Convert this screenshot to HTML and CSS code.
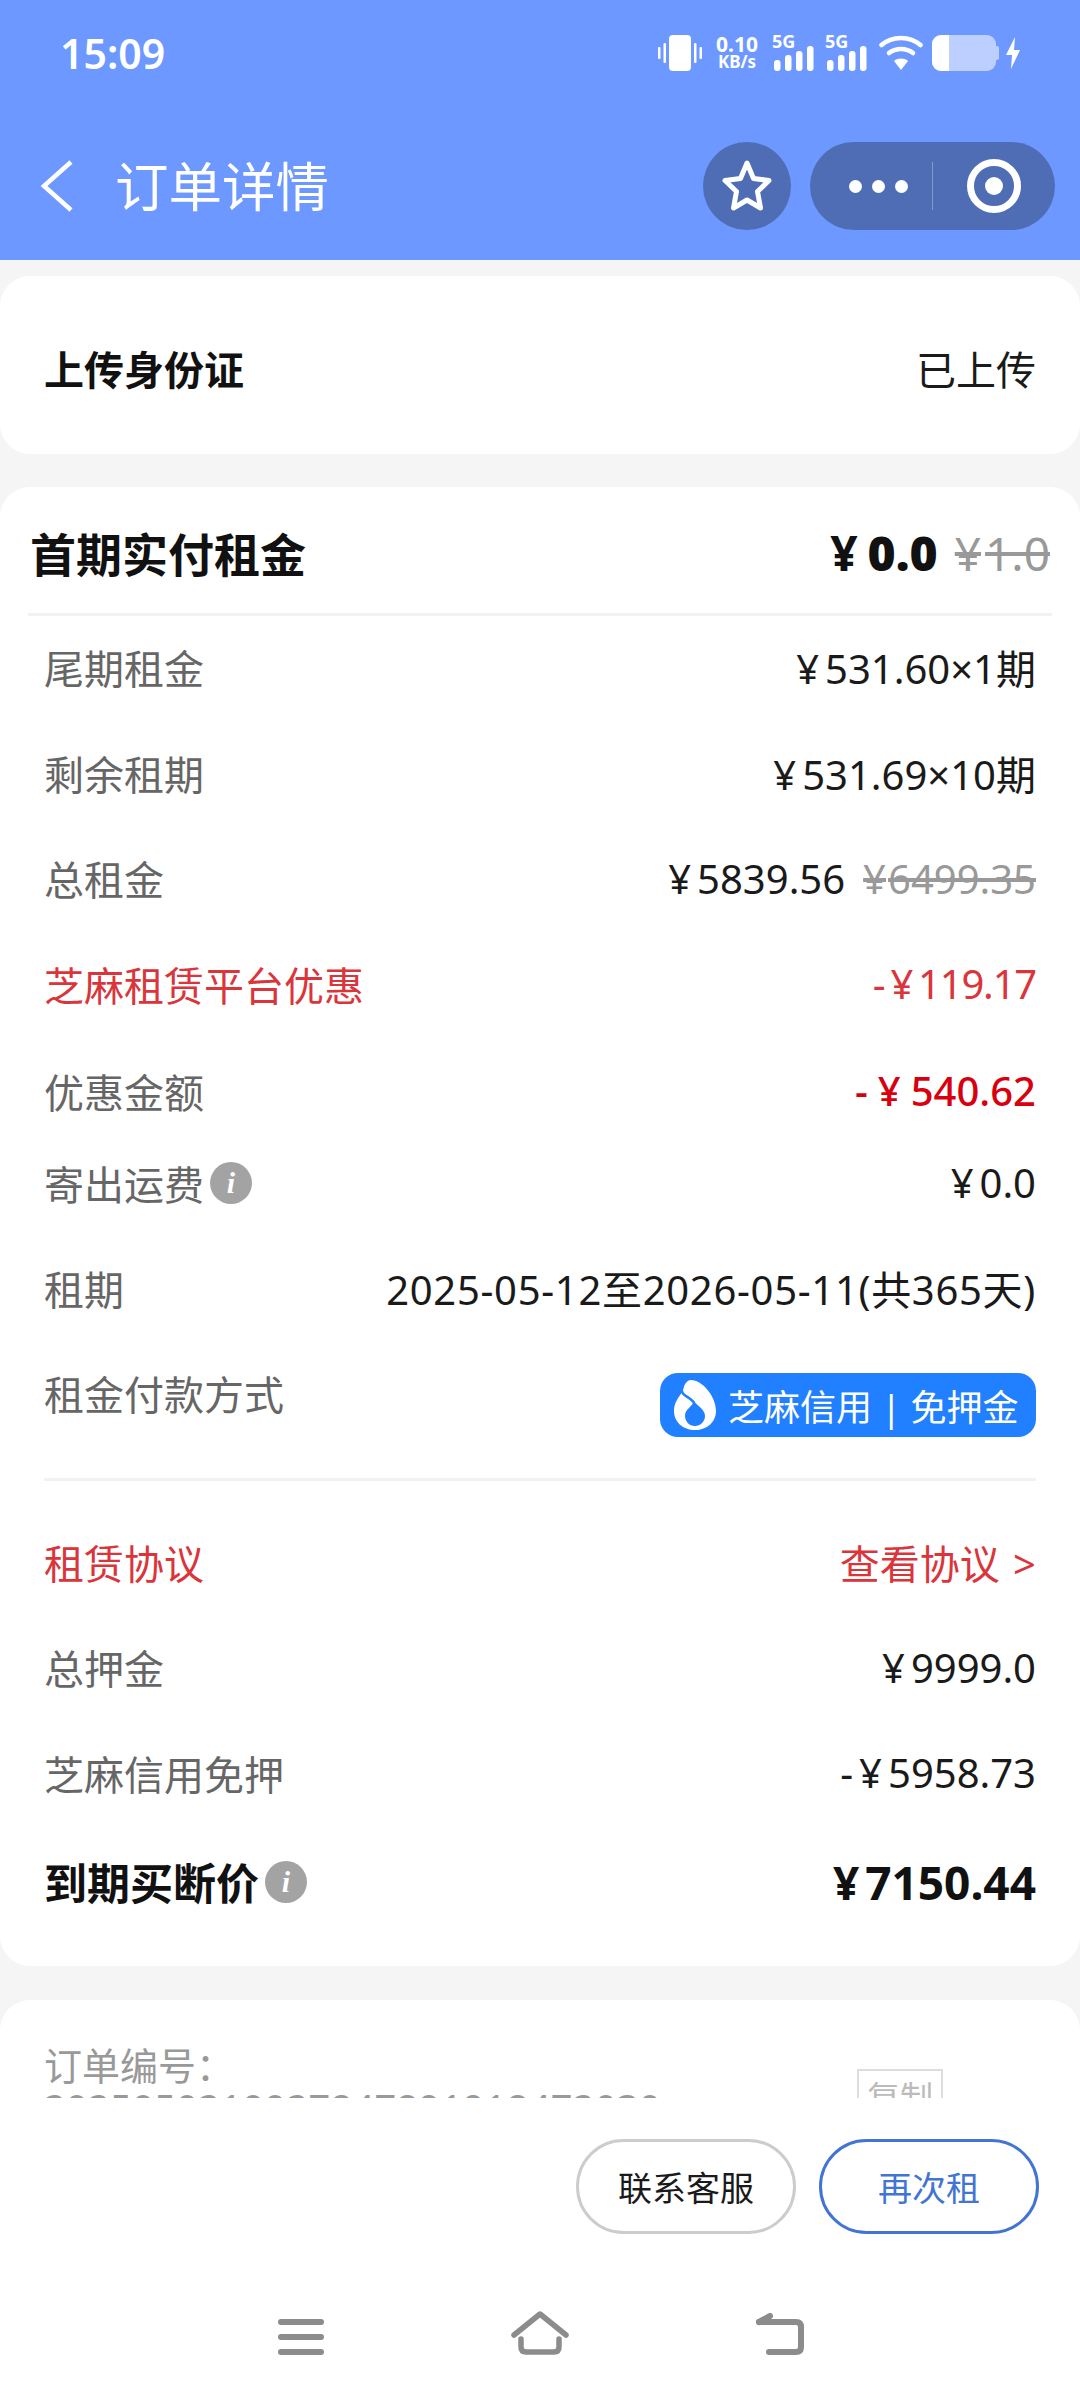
FILE: index.html
```html
<!DOCTYPE html>
<html lang="zh-CN">
<head>
    <meta charset="UTF-8">
    <meta name="viewport" content="width=device-width, initial-scale=1.0">
    <title>订单详情</title>
    <link rel="stylesheet" href="styles.css">
</head>
<body>
    <div class="page">
        <header class="header">
            <div class="status-bar">
                <span class="time">15:09</span>
                <div class="status-icons">
                    <svg class="ic-vibrate" width="44" height="36" viewBox="0 0 44 36" fill="#fff"><rect x="11" y="0" width="22" height="36" rx="4"/><rect x="0" y="12" width="2.5" height="12" rx="1"/><rect x="5.5" y="8" width="2.5" height="20" rx="1"/><rect x="36" y="8" width="2.5" height="20" rx="1"/><rect x="41.5" y="12" width="2.5" height="12" rx="1"/></svg>
                    <div class="speed"><span class="speed-num">0.10</span><span>KB/s</span></div>
                    <div class="signal">
                        <span class="net">5G</span>
                        <svg width="40" height="25" viewBox="0 0 40 25" fill="#fff"><rect x="0" y="14" width="6.500" height="11" rx="3"/><rect x="11" y="9" width="6.500" height="16" rx="3"/><rect x="22" y="5" width="6.500" height="20" rx="3"/><rect x="33" y="0" width="6.500" height="25" rx="3"/></svg>
                    </div>
                    <div class="signal">
                        <span class="net">5G</span>
                        <svg width="40" height="25" viewBox="0 0 40 25" fill="#fff"><rect x="0" y="14" width="6.500" height="11" rx="3"/><rect x="11" y="9" width="6.500" height="16" rx="3"/><rect x="22" y="5" width="6.500" height="20" rx="3"/><rect x="33" y="0" width="6.500" height="25" rx="3"/></svg>
                    </div>
                    <svg class="ic-wifi" width="44" height="36" viewBox="0 0 44 36" fill="none" stroke="#fff" stroke-width="4.500" stroke-linecap="round"><path d="M2.500 10C13 0.500 31 0.500 41.500 10"/><path d="M10 18C16.500 12.500 27.500 12.500 34 18"/><path d="M22 35L15 26C19 22.800 25 22.800 29 26Z" fill="#fff" stroke="none"/></svg>
                    <div class="battery"><div class="battery-fill"></div></div>
                    <svg class="ic-bolt" width="14" height="32" viewBox="0 0 14 32" fill="#fff"><path d="M9 0L0 18H6L5 32L14 13H8Z"/></svg>
                </div>
            </div>
            <div class="nav-bar">
                <svg class="ic-back" width="34" height="52" viewBox="0 0 34 52" fill="none" stroke="#fff" stroke-width="4.500"><path d="M31 2L4 26L31 50"/></svg>
                <h1 class="nav-title">订单详情</h1>
                <div class="fav">
                    <svg width="50" height="52" viewBox="0 0 50 52" fill="none" stroke="#fff" stroke-width="5" stroke-linejoin="round"><path d="M25 3L31.500 18.500L47 20.500L35.500 31.500L38.500 48L25 40L11.500 48L14.500 31.500L3 20.500L18.500 18.500Z"/></svg>
                </div>
                <div class="capsule">
                    <div class="capsule-more"><i></i><i></i><i></i></div>
                    <div class="capsule-line"></div>
                    <div class="capsule-ring"><i></i></div>
                </div>
            </div>
        </header>

        <main class="content">
            <section class="card card-upload">
                <span class="upload-label">上传身份证</span>
                <span class="val">已上传</span>
            </section>

            <section class="card card-price">
                <div class="price-head">
                    <span class="head-label">首期实付租金</span>
                    <span class="head-val"><span class="y">¥</span><b>0.0</b><s><span class="y">¥</span>1.0</s></span>
                </div>
                <div class="row"><span class="lab">尾期租金</span><span class="val"><span class="y">¥</span>531.60×1期</span></div>
                <div class="row"><span class="lab">剩余租期</span><span class="val"><span class="y">¥</span>531.69×10期</span></div>
                <div class="row"><span class="lab">总租金</span><span class="val"><span class="y">¥</span>5839.56<s class="old"><span class="y">¥</span>6499.35</s></span></div>
                <div class="row"><span class="lab red">芝麻租赁平台优惠</span><span class="val red val-tight"><span class="y">-</span><span class="y">¥</span>119.17</span></div>
                <div class="row row-discount"><span class="lab">优惠金额</span><span class="val bright"><span class="y">-</span><span class="y">¥</span>540.62</span></div>
                <div class="row row-freight"><span class="lab">寄出运费<em class="info">i</em></span><span class="val"><span class="y">¥</span>0.0</span></div>
                <div class="row"><span class="lab">租期</span><span class="val val-date">2025-05-12至2026-05-11(共365天)</span></div>
                <div class="row">
                    <span class="lab">租金付款方式</span>
                    <span class="badge">
                        <svg width="42" height="50" viewBox="0 0 42 50">
                            <path fill="#fff" d="M17 0C28 0 42 16 42 31C42 42 33 50 21 50C9 50 0 42 0 31C0 23 4 18 9 11C10 4 13 0 17 0Z"/>
                            <path fill="#2180ff" d="M20 21C23 26 31 29 31 36C31 42 26 46 21 46C15 46 11 41 11 36C11 29 18 27 20 21Z"/>
                            <path fill="none" stroke="#2180ff" stroke-width="2.500" d="M8 11C8 16 17 17 20 23"/>
                        </svg>
                        <span>芝麻信用 | 免押金</span>
                    </span>
                </div>
                <div class="rule"></div>
                <div class="row"><span class="lab red">租赁协议</span><span class="val red val-link">查看协议 &gt;</span></div>
                <div class="row"><span class="lab">总押金</span><span class="val"><span class="y">¥</span>9999.0</span></div>
                <div class="row"><span class="lab">芝麻信用免押</span><span class="val"><span class="y">-</span><span class="y">¥</span>5958.73</span></div>
                <div class="row row-total"><span class="lab strong">到期买断价<em class="info">i</em></span><span class="val strong"><span class="y">¥</span>7150.44</span></div>
            </section>

            <section class="card card-order">
                <div class="order-info">
                    <div class="order-label">订单编号：</div>
                    <div class="order-no">2025050210027847891918472030</div>
                </div>
                <span class="copy">复制</span>
            </section>
        </main>

        <footer class="footer">
            <div class="actions">
                <button class="btn">联系客服</button>
                <button class="btn btn-blue">再次租</button>
            </div>
            <div class="sys-nav">
                <svg width="46" height="36" viewBox="0 0 46 36" fill="#8c8c8c"><rect width="46" height="6" rx="3"/><rect y="15" width="46" height="6" rx="3"/><rect y="30" width="46" height="6" rx="3"/></svg>
                <svg width="58" height="44" viewBox="0 0 58 44" fill="none" stroke="#8c8c8c" stroke-width="5.500" stroke-linejoin="round" stroke-linecap="round"><path d="M3 24L29 3L55 24"/><path d="M10 28V36Q10 41 15 41H43Q48 41 48 36V28"/></svg>
                <svg width="48" height="42" viewBox="0 0 48 42" fill="none" stroke="#8c8c8c" stroke-width="6" stroke-linejoin="round" stroke-linecap="round"><path d="M3 9L14 3"/><path d="M3 9H40Q45 9 45 14V34Q45 39 40 39H13"/></svg>
            </div>
        </footer>
    </div>
</body>
</html>
```

FILE: styles.css
```css
* {
    box-sizing: border-box;
}
body {
    margin: 0;
    font-family: "Noto Sans", "Noto Sans CJK SC", sans-serif;
    background-color: #f5f5f5;
}
.page {
    width: 1080px;
    height: 2400px;
    display: flex;
    flex-direction: column;
    overflow: hidden;
}

/* header */
.header {
    height: 260px;
    flex: none;
    background-color: #6d98ff;
    color: #fff;
}
.status-bar {
    height: 106px;
    padding: 0 60px;
    display: flex;
    align-items: center;
    justify-content: space-between;
}
.time {
    font-size: 41px;
    font-weight: 600;
}
.status-icons {
    display: flex;
    align-items: center;
}
.speed {
    width: 44px;
    margin-left: 13px;
    display: flex;
    flex-direction: column;
    align-items: center;
    font-size: 17px;
    line-height: 18px;
    font-weight: 700;
    white-space: nowrap;
}
.speed-num {
    font-size: 21px;
}
.signal {
    position: relative;
    width: 40px;
    height: 36px;
    margin-left: 15px;
    display: flex;
    align-items: flex-end;
}
.signal + .signal {
    margin-left: 13px;
}
.net {
    position: absolute;
    left: -2px;
    top: -3px;
    font-size: 18px;
    line-height: 18px;
    font-weight: 700;
}
.ic-wifi {
    margin-left: 12px;
}
.battery {
    position: relative;
    width: 64px;
    height: 36px;
    margin-left: 9px;
    margin-right: 3px;
    border-radius: 9px;
    background-color: #bccfff;
}
.battery::after {
    content: "";
    position: absolute;
    left: 64px;
    top: 11px;
    width: 3px;
    height: 14px;
    border-radius: 0 2px 2px 0;
    background-color: #bccfff;
}
.battery-fill {
    width: 17px;
    height: 100%;
    border-radius: 9px 0 0 9px;
    background-color: #fff;
}
.ic-bolt {
    margin-left: 7px;
}
.nav-bar {
    height: 88px;
    margin-top: 36px;
    padding: 0 25px 0 40px;
    display: flex;
    align-items: center;
}
.nav-title {
    flex: 1;
    margin: 0 0 0 41px;
    padding-bottom: 5px;
    font-size: 53.500px;
    font-weight: 400;
}
.fav {
    width: 88px;
    height: 88px;
    border-radius: 50%;
    background-color: #4f6db5;
    display: flex;
    align-items: center;
    justify-content: center;
}
.capsule {
    width: 245px;
    height: 88px;
    margin-left: 19px;
    border-radius: 44px;
    background-color: #4f6db5;
    display: flex;
    align-items: center;
}
.capsule-more {
    display: flex;
    gap: 10px;
    margin-left: 39px;
}
.capsule-more i {
    width: 13px;
    height: 13px;
    border-radius: 50%;
    background-color: #fff;
}
.capsule-line {
    width: 1px;
    height: 48px;
    margin-left: 24px;
    background-color: #8198cd;
}
.capsule-ring {
    width: 54px;
    height: 54px;
    margin-left: 34px;
    border: 7px solid #fff;
    border-radius: 50%;
    display: flex;
    align-items: center;
    justify-content: center;
}
.capsule-ring i {
    width: 18px;
    height: 18px;
    border-radius: 50%;
    background-color: #fff;
}

/* cards */
.content {
    flex: 1;
    min-height: 0;
    overflow: hidden;
    padding-top: 16px;
}
.card {
    background-color: #fff;
    border-radius: 30px;
}
.card-upload {
    height: 178px;
    padding: 6px 44px 0;
    display: flex;
    align-items: center;
    justify-content: space-between;
}
.upload-label {
    font-size: 40px;
    font-weight: 700;
    color: #111;
}
.card-price {
    height: 1479px;
    margin-top: 33px;
    padding: 0 28px;
}
.price-head {
    height: 129px;
    padding: 4px 2px 0;
    display: flex;
    align-items: center;
    justify-content: space-between;
    border-bottom: 3px solid #f2f2f2;
}
.head-label {
    font-size: 46px;
    font-weight: 700;
    color: #111;
}
.head-val {
    font-size: 48px;
    font-weight: 700;
    color: #111;
}
.head-val .y {
    margin-right: 10px;
}
.head-val s {
    margin-left: 17px;
    font-size: 46px;
    font-weight: 400;
    color: #999;
}
.head-val s .y {
    margin-right: 4px;
}
.y {
    margin-right: 6px;
}
.row {
    height: 105.500px;
    padding: 0 16px 3px;
    display: flex;
    align-items: center;
    justify-content: space-between;
}
.row-discount {
    margin-bottom: -15px;
    padding-bottom: 0;
}
.row-freight {
    height: 108px;
    padding-bottom: 0;
}
.row-total {
    height: 112px;
}
.lab {
    display: flex;
    align-items: center;
    font-size: 40px;
    color: #666;
}
.val {
    font-size: 40px;
    color: #1a1a1a;
}
.val-date {
    letter-spacing: 0.700px;
}
.val-link {
    word-spacing: 3px;
}
.val-tight {
    letter-spacing: -1.200px;
}
.red {
    color: #d9353b;
}
.bright {
    color: #d8000f;
    font-weight: 500;
}
.bright .y {
    margin-right: 10px;
}
.lab.strong {
    font-size: 43px;
    font-weight: 700;
    color: #111;
}
.val.strong {
    font-size: 46px;
    font-weight: 700;
    color: #111;
}
.old {
    margin-left: 18px;
    color: #999;
}
.old .y {
    margin-right: 2px;
}
.info {
    width: 42px;
    height: 42px;
    margin-left: 6px;
    border-radius: 50%;
    background-color: #a3a3a3;
    color: #fff;
    font: italic 700 30px/42px "Liberation Serif", serif;
    text-align: center;
}
.badge {
    width: 376px;
    height: 64px;
    margin-top: 24px;
    padding: 0 14px;
    border-radius: 18px;
    background-color: #2180ff;
    color: #fff;
    font-size: 36px;
    display: flex;
    align-items: center;
    gap: 12px;
    white-space: nowrap;
}
.rule {
    height: 3px;
    margin: 30px 16px;
    background-color: #f2f2f2;
}
.card-order {
    height: 200px;
    margin-top: 34px;
    padding: 44px 0 0 44px;
    display: flex;
    align-items: flex-start;
}
.order-info {
    width: 813px;
}
.order-label,
.order-no {
    font-size: 38px;
    line-height: 42px;
    color: #999;
}
.order-no {
    letter-spacing: 0.300px;
    white-space: nowrap;
}
.copy {
    margin-top: 25px;
    padding: 2px 8px;
    border: 2px solid #ddd;
    font-size: 33px;
    line-height: 50px;
    color: #bbb;
}

/* footer */
.footer {
    height: 302px;
    flex: none;
    background-color: #fff;
}
.actions {
    padding: 41px 41px 0 0;
    display: flex;
    justify-content: flex-end;
    gap: 23px;
}
.btn {
    width: 220px;
    height: 95px;
    padding: 0;
    border: 3px solid #ccc;
    border-radius: 48px;
    background-color: #fff;
    font-family: inherit;
    font-size: 34px;
    color: #1a1a1a;
}
.btn-blue {
    border-color: #4274d3;
    color: #4274d3;
}
.sys-nav {
    margin-top: 77px;
    padding: 0 276px 0 278px;
    display: flex;
    align-items: flex-end;
    justify-content: space-between;
}
```
